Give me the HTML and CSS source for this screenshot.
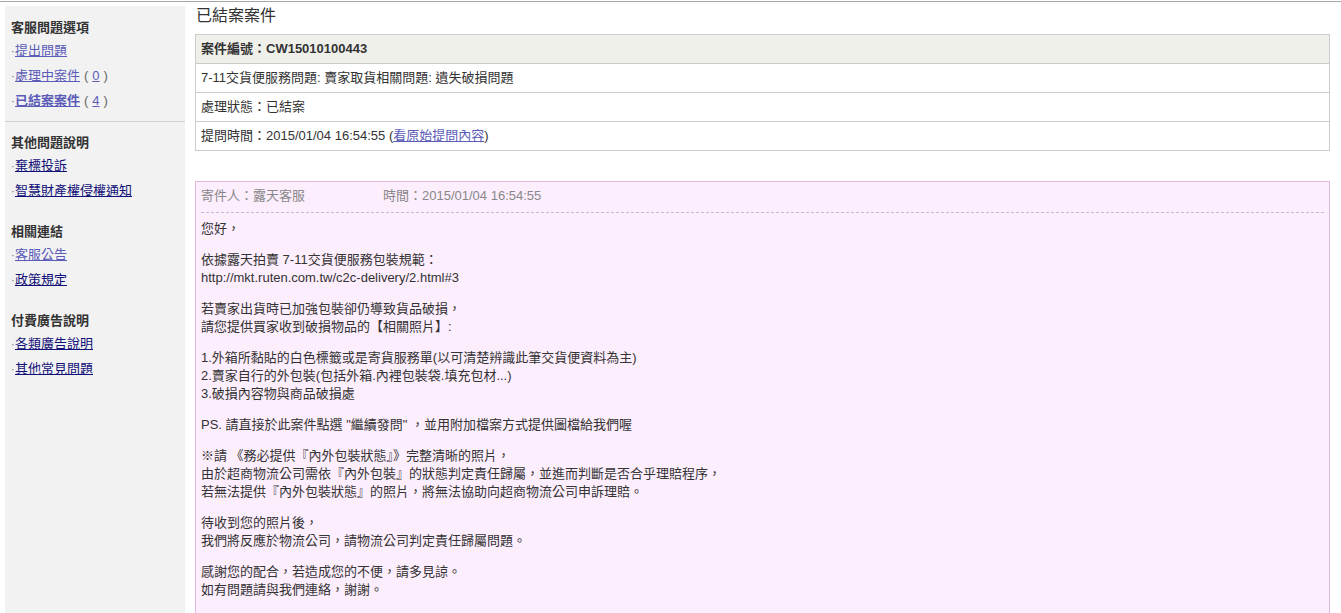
FILE: index.html
```html
<!DOCTYPE html>
<html lang="zh-Hant">
<head>
<meta charset="utf-8">
<title>已結案案件</title>
<link rel="stylesheet" href="styles.css">
</head>
<body>
<div class="page">
  <aside class="sidebar">
    <div class="group first sep">
      <div class="heading">客服問題選項</div>
      <div class="item"><span class="dot">·</span><a class="lnk visited" href="#">提出問題</a></div>
      <div class="item"><span class="dot">·</span><a class="lnk visited" href="#">處理中案件</a><span class="paren">(</span><a class="lnk visited" href="#">0</a><span class="paren">)</span></div>
      <div class="item"><span class="dot">·</span><a class="lnk visited strong" href="#">已結案案件</a><span class="paren">(</span><a class="lnk visited" href="#">4</a><span class="paren">)</span></div>
    </div>
    <div class="group">
      <div class="heading">其他問題說明</div>
      <div class="item"><span class="dot">·</span><a class="lnk" href="#">棄標投訴</a></div>
      <div class="item"><span class="dot">·</span><a class="lnk" href="#">智慧財產權侵權通知</a></div>
    </div>
    <div class="group">
      <div class="heading">相關連結</div>
      <div class="item"><span class="dot">·</span><a class="lnk visited" href="#">客服公告</a></div>
      <div class="item"><span class="dot">·</span><a class="lnk" href="#">政策規定</a></div>
    </div>
    <div class="group">
      <div class="heading">付費廣告說明</div>
      <div class="item"><span class="dot">·</span><a class="lnk" href="#">各類廣告說明</a></div>
      <div class="item"><span class="dot">·</span><a class="lnk" href="#">其他常見問題</a></div>
    </div>
  </aside>
  <main class="content">
    <h1 class="title">已結案案件</h1>
    <div class="case">
      <div class="row head">案件編號：CW15010100443</div>
      <div class="row">7-11交貨便服務問題: 賣家取貨相關問題: 遺失破損問題</div>
      <div class="row">處理狀態：已結案</div>
      <div class="row">提問時間：2015/01/04 16:54:55 (<a class="orig" href="#">看原始提問內容</a>)</div>
    </div>
    <div class="msg">
      <div class="msg-head"><span class="sender">寄件人：露天客服</span><span>時間：2015/01/04 16:54:55</span></div>
      <div class="msg-body">
        <p>您好，</p>
        <p>依據露天拍賣 7-11交貨便服務包裝規範：<br>http://mkt.ruten.com.tw/c2c-delivery/2.html#3</p>
        <p>若賣家出貨時已加強包裝卻仍導致貨品破損，<br>請您提供買家收到破損物品的【相關照片】:</p>
        <p>1.外箱所黏貼的白色標籤或是寄貨服務單(以可清楚辨識此筆交貨便資料為主)<br>2.賣家自行的外包裝(包括外箱.內裡包裝袋.填充包材...)<br>3.破損內容物與商品破損處</p>
        <p>PS. 請直接於此案件點選 "繼續發問" ，並用附加檔案方式提供圖檔給我們喔</p>
        <p>※請 《務必提供『內外包裝狀態』》完整清晰的照片，<br>由於超商物流公司需依『內外包裝』的狀態判定責任歸屬，並進而判斷是否合乎理賠程序，<br>若無法提供『內外包裝狀態』的照片，將無法協助向超商物流公司申訴理賠。</p>
        <p>待收到您的照片後，<br>我們將反應於物流公司，請物流公司判定責任歸屬問題。</p>
        <p>感謝您的配合，若造成您的不便，請多見諒。<br>如有問題請與我們連絡，謝謝。</p>
      </div>
    </div>
  </main>
</div>
</body>
</html>
```

FILE: styles.css
```css
html, body {
  margin: 0;
  padding: 0;
  background: #fff;
}
body {
  font-family: "Liberation Sans", Arial, "Noto Sans CJK TC", sans-serif;
  font-size: 13px;
  color: #333;
  padding-top: 1px;
}
.page {
  border-top: 1px solid #a6a6a6;
  display: flex;
  align-items: flex-start;
  padding: 4px 11px 0 5px;
  gap: 10px;
  min-height: 620px;
}
.sidebar {
  width: 180px;
  flex: none;
  background: #f2f2f2;
  min-height: 620px;
  padding-left: 6px;
  box-sizing: border-box;
}
.group {
  padding: 9px 0 8px;
}
.group.first {
  padding-top: 10px;
}
.group.sep {
  border-bottom: 1px solid #cfcfcf;
  margin-left: -6px;
  padding-left: 6px;
}
.heading {
  font-weight: bold;
  font-size: 13px;
  line-height: 22px;
  color: #333;
  font-family: "Noto Sans CJK TC", sans-serif;
}
.item {
  line-height: 25px;
  height: 25px;
  font-size: 13px;
}
.dot {
  color: #777;
  font-size: 11px;
  display: inline-block;
  width: 4px;
}
.lnk {
  color: #101078;
  text-decoration: underline;
}
.lnk.visited {
  color: #5b5bb8;
}
.lnk.strong {
  font-weight: bold;
}
.paren {
  color: #666;
  margin: 0 4px;
}
.content {
  flex: 1;
  min-width: 0;
}
.title {
  margin: 0 0 8px 1px;
  font-size: 16px;
  line-height: 20px;
  font-weight: normal;
  color: #333;
}
.case {
  border: 1px solid #cccccc;
  border-bottom: none;
}
.row {
  height: 28px;
  line-height: 28px;
  padding-left: 5px;
  border-bottom: 1px solid #cccccc;
  color: #333;
}
.row.head {
  background: #f0f0eb;
  font-weight: bold;
}
.orig {
  color: #5b5bb8;
  text-decoration: underline;
}
.msg {
  margin-top: 30px;
  border: 1px solid #dfb7df;
  background: #fdeefd;
  padding: 0 5px 40px;
}
.msg-head {
  color: #888;
  line-height: 18px;
  padding: 5px 0 7px;
  border-bottom: 1px dashed #c8bcc8;
}
.sender {
  display: inline-block;
  width: 182px;
}
.msg-body {
  padding-top: 7px;
  line-height: 18px;
  color: #333;
}
.msg-body p {
  margin: 0 0 13px;
}
```
